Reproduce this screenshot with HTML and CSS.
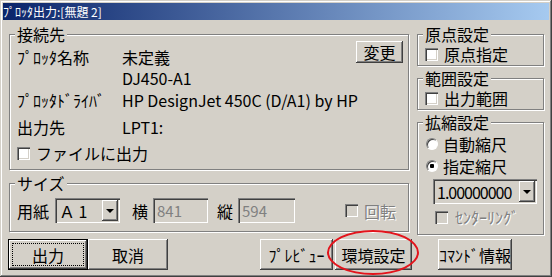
FILE: index.html
```html
<!DOCTYPE html>
<html>
<head>
    <meta charset="UTF-8">
    <title>ﾌﾟﾛｯﾀ出力</title>
    <link rel="stylesheet" href="styles.css">
</head>
<body>
    <div class="window">
        <div class="titlebar">ﾌﾟﾛｯﾀ出力:[無題 2]</div>

        <div class="main">
            <div class="col-left">
                <fieldset class="group group-dest">
                    <legend>接続先</legend>
                    <div class="dest-grid">
                        <span class="label">ﾌﾟﾛｯﾀ名称</span>
                        <span class="value">未定義</span>
                        <button class="btn btn-change">変更</button>
                        <span class="value">DJ450-A1</span>
                        <span class="label">ﾌﾟﾛｯﾀﾄﾞﾗｲﾊﾞ</span>
                        <span class="value value-wide">HP DesignJet 450C (D/A1) by HP</span>
                        <span class="label">出力先</span>
                        <span class="value">LPT1:</span>
                    </div>
                    <label class="check-row"><span class="check"></span>ファイルに出力</label>
                </fieldset>

                <fieldset class="group group-size">
                    <legend>サイズ</legend>
                    <div class="size-row">
                        <span class="size-label">用紙</span>
                        <span class="combo combo-paper"><span class="combo-text">Ａ 1</span><span class="drop"><span class="arrow"></span></span></span>
                        <span class="size-label gap-w">横</span>
                        <span class="edit edit-w">841</span>
                        <span class="size-label gap-h">縦</span>
                        <span class="edit edit-h">594</span>
                        <label class="check-row rotate"><span class="check check-off"></span><span class="disabled">回転</span></label>
                    </div>
                </fieldset>
            </div>

            <div class="col-right">
                <fieldset class="group group-small">
                    <legend>原点設定</legend>
                    <label class="check-row"><span class="check"></span>原点指定</label>
                </fieldset>
                <fieldset class="group group-small">
                    <legend>範囲設定</legend>
                    <label class="check-row"><span class="check"></span>出力範囲</label>
                </fieldset>
                <fieldset class="group group-scale">
                    <legend>拡縮設定</legend>
                    <label class="radio-row"><span class="radio"></span>自動縮尺</label>
                    <label class="radio-row"><span class="radio radio-on"></span>指定縮尺</label>
                    <span class="combo combo-scale"><span class="combo-text">1.00000000</span><span class="drop"><span class="arrow"></span></span></span>
                    <label class="check-row centering"><span class="check check-off"></span><span class="disabled">ｾﾝﾀｰﾘﾝｸﾞ</span></label>
                </fieldset>
            </div>
        </div>

        <div class="actions">
            <button class="btn btn-default">出力</button>
            <button class="btn">取消</button>
            <button class="btn btn-preview">ﾌﾟﾚﾋﾞｭｰ</button>
            <button class="btn btn-env">環境設定</button>
            <button class="btn btn-cmd">ｺﾏﾝﾄﾞ情報</button>
        </div>

        <div class="mark"></div>
    </div>
</body>
</html>
```

FILE: styles.css
```css
* {
    box-sizing: border-box;
}
html, body {
    margin: 0;
    padding: 0;
}
body {
    width: 552px;
    height: 277px;
    overflow: hidden;
    background-color: #d4d0c8;
    color: #000;
    font-family: "Noto Sans CJK JP", sans-serif;
    font-size: 16px;
    line-height: 16px;
}
.window {
    position: relative; /* for the red mark */
    width: 552px;
    height: 277px;
    padding: 3px;
    background-color: #d4d0c8;
    box-shadow: inset -1px -1px #404040, inset 1px 1px #d4d0c8, inset -2px -2px #808080, inset 2px 2px #fff;
}
.titlebar {
    height: 17px;
    background: linear-gradient(90deg, #0a246a, #a6caf0);
    color: #fff;
    font-size: 12px;
    line-height: 17px;
    white-space: pre;
}
.main {
    display: grid;
    grid-template-columns: 400px 127px;
    column-gap: 8px;
    align-items: start;
    padding: 6px 0 0 6px;
}
.col-left, .col-right {
    display: flex;
    flex-direction: column;
}

/* group boxes */
.group {
    margin: 0;
    min-width: 0;
    border: 1px solid #808080;
    box-shadow: inset 1px 1px #fff, 1px 1px #fff;
}
.group legend {
    padding: 0 2px;
    margin-left: -2px;
    line-height: 16px;
    background-color: #d4d0c8;
}
.group-dest {
    padding: 7px 5px 8px 7px;
}
.group-size {
    margin-top: 5px;
    padding: 7px 5px 8px 7px;
}
.group-small {
    padding: 4px 5px 3px 7px;
}
.group-small + .group-small, .group-scale {
    margin-top: 4px;
}
.group-scale {
    padding: 6px 5px 9px 7px;
}

/* connection */
.dest-grid {
    display: grid;
    grid-template-columns: 105px 1fr 47px;
    grid-template-rows: 21px 22px 27px 26px;
    white-space: nowrap;
}
.label {
    grid-column: 1;
}
.value {
    grid-column: 2;
}
.value-wide {
    grid-column: 2 / 4;
}
.btn-change {
    grid-column: 3;
    grid-row: 1 / 3;
    align-self: start;
    margin-top: -8px;
    height: 22px;
}

/* checkboxes and radios */
.check-row, .radio-row {
    display: flex;
    align-items: center;
    gap: 6px;
    height: 16px;
    white-space: nowrap;
}
.check {
    display: inline-block;
    width: 13px;
    height: 13px;
    background-color: #fff;
    box-shadow: inset 1px 1px #808080, inset 2px 2px #404040, inset -1px -1px #fff, inset -2px -2px #d4d0c8;
}
.check-off {
    background-color: #d4d0c8;
}
.radio-row {
    gap: 5px;
}
.radio-row + .radio-row {
    margin-top: 6px;
}
.radio {
    display: inline-block;
    width: 12px;
    height: 12px;
    margin-left: 1px;
    border-radius: 50%;
    background-color: #fff;
    border: 1px solid;
    border-color: #808080 #fff #fff #808080;
    box-shadow: inset 1px 1px #404040;
}
.radio-on {
    background: radial-gradient(circle, #000 0 2px, #fff 2.5px);
}
.disabled {
    color: #808080;
    text-shadow: 1px 1px 0 #fff;
}

/* size row */
.size-row {
    display: flex;
    align-items: center;
    height: 25px;
    white-space: nowrap;
}
.size-label {
    flex: none;
}
.gap-w {
    margin-left: 12px;
}
.gap-h {
    margin-left: 9px;
}
.combo, .edit {
    display: flex;
    align-items: center;
    height: 25px;
    padding: 2px;
    box-shadow: inset 1px 1px #808080, inset 2px 2px #404040, inset -1px -1px #fff, inset -2px -2px #d4d0c8;
}
.combo-text {
    flex: 1;
    padding-left: 2px;
}
.combo-paper {
    width: 65px;
    margin-left: 6px;
}
.combo-scale {
    width: 104px;
    margin-top: 5px;
    margin-left: 8px;
}
.combo-scale .combo-text {
    letter-spacing: -1px;
}
.drop {
    display: flex;
    align-items: center;
    justify-content: center;
    width: 16px;
    height: 21px;
    box-shadow: inset -1px -1px #404040, inset 1px 1px #fff, inset -2px -2px #808080;
}
.arrow {
    width: 0;
    height: 0;
    border-left: 4px solid transparent;
    border-right: 4px solid transparent;
    border-top: 4px solid #000;
}
.edit {
    padding-left: 4px;
    color: #808080;
    font-size: 15px;
}
.edit-w {
    width: 55px;
    margin-left: 5px;
}
.edit-h {
    width: 57px;
    margin-left: 5px;
}
.rotate {
    margin-left: 50px;
}
.centering {
    margin-top: 5px;
    margin-left: 10px;
    gap: 7px;
}

/* buttons */
.btn {
    padding: 0;
    border: none;
    background-color: #d4d0c8;
    color: #000;
    font: inherit;
    line-height: 16px;
    box-shadow: inset -1px -1px #404040, inset 1px 1px #fff, inset -2px -2px #808080;
}
.actions {
    display: flex;
    padding: 4px 0 0 5px;
}
.actions .btn {
    width: 80px;
    height: 31px;
}
.btn-default {
    border: 1px solid #000;
    outline: 1px dotted #000;
    outline-offset: -5px;
}
.actions .btn-preview {
    width: 73px;
    margin-left: 92px;
}
.actions .btn-env {
    width: 77px;
    margin-left: 2px;
}
.actions .btn-cmd {
    width: 74px;
    margin-left: 26px;
}

/* red hand-drawn ellipse over the button */
.mark {
    position: absolute;
    left: 327px;
    top: 230px;
    width: 92px;
    height: 45px;
    border: 2px solid #e3141c;
    border-radius: 50%;
}
```
